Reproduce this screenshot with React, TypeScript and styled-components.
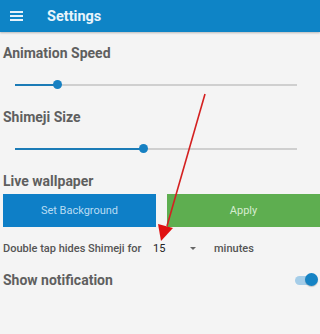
import styled, { createGlobalStyle } from 'styled-components';

const Global = createGlobalStyle`
	html, body {
		margin: 0;
		padding: 0;
		background: #f4f4f4;
	}
	body {
		font-family: Roboto, 'Liberation Sans', sans-serif;
		width: 320px;
		height: 334px;
		overflow: hidden;
	}
`;

const Screen = styled.div`
	position: relative;
	width: 320px;
	height: 334px;
	background: #f4f4f4;
`;

const AppBar = styled.header`
	height: 32px;
	background: #0e84c6;
	display: flex;
	align-items: center;
	padding-left: 10px;
	gap: 24px;
	box-shadow: 0 1px 2px rgba(0, 0, 0, 0.25);
`;

const Menu = styled.div`
	width: 13px;
	display: flex;
	flex-direction: column;
	gap: 2px;
	span {
		display: block;
		height: 2px;
		background: #e6f2fa;
	}
`;

const Title = styled.h1`
	margin: 0;
	font-size: 14.5px;
	font-weight: 700;
	color: #e8f4fb;
`;

const Body = styled.main`
	padding: 12px 0 0 3px;
`;

const Label = styled.h2`
	margin: 0;
	height: 18px;
	line-height: 18px;
	font-size: 14px;
	font-weight: 700;
	color: #5f5f5f;
`;

const SliderRow = styled.div`
	height: 46px;
	display: flex;
	align-items: center;
	padding: 0 23px 0 12px;
`;

const Track = styled.div`
	position: relative;
	flex: 1;
	height: 2px;
	background: #cfcfcf;
`;

const Fill = styled.div`
	height: 2px;
	background: #1b7bb6;
`;

const Thumb = styled.div`
	position: absolute;
	top: -4px;
	width: 9px;
	height: 9px;
	margin-left: -4.5px;
	border-radius: 50%;
	background: #1680c2;
`;

const Buttons = styled.div`
	display: flex;
	gap: 11px;
	margin-top: 4px;
`;

const Button = styled.button<{ $tone: 'blue' | 'green' }>`
	width: 153px;
	height: 33px;
	padding: 0;
	border: none;
	font-family: inherit;
	font-size: 11px;
	color: ${(p) => (p.$tone === 'blue' ? '#b9dcf3' : '#d6ecd0')};
	background: ${(p) => (p.$tone === 'blue' ? '#0e7fc7' : '#5eae50')};
`;

const HideRow = styled.div`
	display: flex;
	align-items: center;
	height: 22px;
	margin-top: 10px;
	font-size: 11px;
	font-weight: 500;
	color: #555;
`;

const HideText = styled.span`
	width: 150px;
`;

const Value = styled.span`
	width: 37px;
	color: #222;
	font-weight: 400;
`;

const Caret = styled.span`
	width: 0;
	height: 0;
	border-left: 3.5px solid transparent;
	border-right: 3.5px solid transparent;
	border-top: 3.5px solid #666;
	margin-right: 18px;
`;

const SwitchRow = styled.div`
	display: flex;
	align-items: center;
	justify-content: space-between;
	margin-top: 12px;
	padding-right: 5px;
`;

const Switch = styled.div`
	position: relative;
	width: 20px;
	height: 9px;
	border-radius: 5px;
	background: #a5cde8;
`;

const Knob = styled.div`
	position: absolute;
	right: -3px;
	top: -2.5px;
	width: 13px;
	height: 13px;
	border-radius: 50%;
	background: #1683c4;
	box-shadow: 0 1px 1px rgba(0, 0, 0, 0.2);
`;

const Annotation = styled.svg`
	position: absolute;
	left: 0;
	top: 0;
	pointer-events: none;
`;

function Slider({ value }: { value: number }) {
	return (
		<SliderRow>
			<Track>
				<Fill style={{ width: `${value}%` }} />
				<Thumb style={{ left: `${value}%` }} />
			</Track>
		</SliderRow>
	);
}

function App() {
	return (
		<Screen>
			<Global />
			<AppBar>
				<Menu>
					<span />
					<span />
					<span />
				</Menu>
				<Title>Settings</Title>
			</AppBar>
			<Body>
				<Label>Animation Speed</Label>
				<Slider value={15.2} />
				<Label>Shimeji Size</Label>
				<Slider value={45.4} />
				<Label>Live wallpaper</Label>
				<Buttons>
					<Button $tone='blue'>Set Background</Button>
					<Button $tone='green'>Apply</Button>
				</Buttons>
				<HideRow>
					<HideText>Double tap hides Shimeji for</HideText>
					<Value>15</Value>
					<Caret />
					<span>minutes</span>
				</HideRow>
				<SwitchRow>
					<Label>Show notification</Label>
					<Switch>
						<Knob />
					</Switch>
				</SwitchRow>
			</Body>
			<Annotation width='320' height='334' viewBox='0 0 320 334'>
				<line x1='205' y1='94' x2='167' y2='226' stroke='#d42020' strokeWidth='1.6' />
				<polygon points='161,241 158,224 173,228' fill='#e01010' />
			</Annotation>
		</Screen>
	);
}

export default App;
